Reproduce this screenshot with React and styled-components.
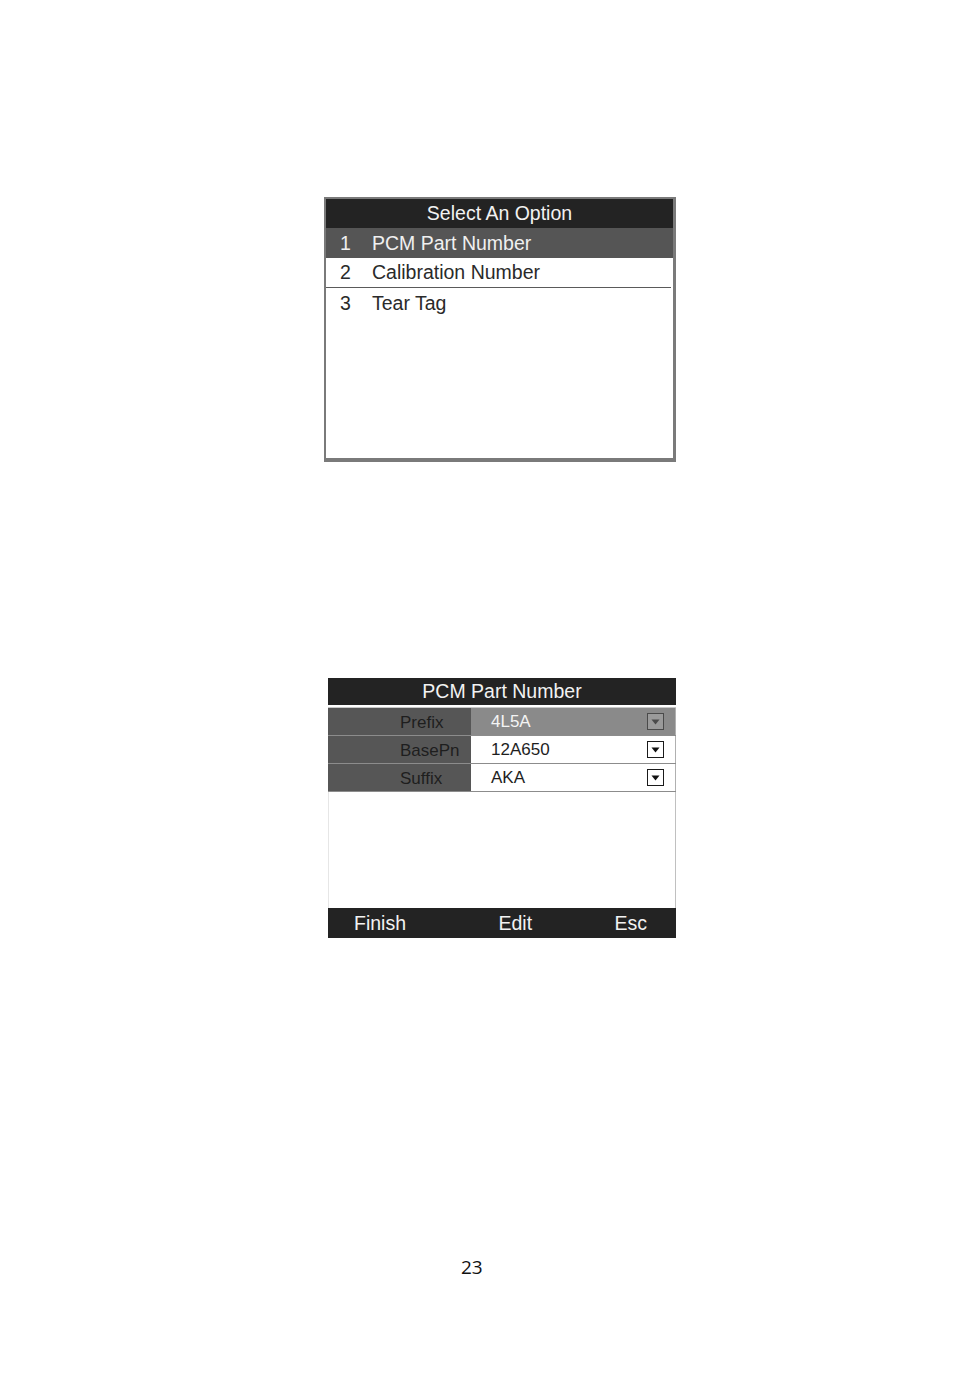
import React from 'react'
import styled, { createGlobalStyle } from 'styled-components'

const Global = createGlobalStyle`
    html, body {
        margin: 0;
        padding: 0;
        background: #ffffff;
    }
    body {
        font-family: "Liberation Sans", Arial, sans-serif;
    }
`

const Page = styled.div`
    width: 954px;
    height: 1374px;
    display: flex;
    flex-direction: column;
    align-items: flex-start;
    padding-top: 197px;
    box-sizing: border-box;
`

const MenuScreen = styled.div`
    margin-left: 324px;
    width: 352px;
    height: 265px;
    box-sizing: border-box;
    border: 2px solid #7a7a7a;
    border-bottom-width: 4px;
    border-right-width: 3px;
    background: #ffffff;
    display: flex;
    flex-direction: column;
`

const TitleBar = styled.div`
    height: ${p => p.h}px;
    flex: none;
    background: #232323;
    color: #f2f2f2;
    font-size: 19.5px;
    display: flex;
    align-items: center;
    justify-content: center;
`

const MenuRow = styled.div`
    height: ${p => p.h}px;
    flex: none;
    display: flex;
    align-items: center;
    font-size: 19.5px;
    background: ${p => (p.active ? '#555555' : '#ffffff')};
    color: ${p => (p.active ? '#f0f0f0' : '#2a2a2a')};
    border-bottom: ${p => (p.line ? '1px solid #5a5a5a' : 'none')};
    margin-right: ${p => (p.line ? '2px' : '0')};
`

const Num = styled.span`
    width: 46px;
    padding-left: 14px;
    box-sizing: border-box;
    flex: none;
`

const PartScreen = styled.div`
    margin-left: 328px;
    margin-top: 216px;
    width: 348px;
    height: 260px;
    display: flex;
    flex-direction: column;
    background: #ffffff;
`

const Gap = styled.div`
    height: 2px;
    flex: none;
    background: #ffffff;
    border-bottom: 1px solid #c8c8c8;
`

const FieldRow = styled.div`
    display: flex;
    height: 27px;
    flex: none;
    border-bottom: 1px solid #8c8c8c;
`

const Label = styled.div`
    width: 143px;
    flex: none;
    background: #565656;
    color: #1e1e1e;
    font-size: 17px;
    padding-left: 72px;
    box-sizing: border-box;
    display: flex;
    align-items: center;
    padding-top: 2px;
`

const Value = styled.div`
    flex: 1;
    background: ${p => (p.active ? '#8a8a8a' : '#ffffff')};
    color: ${p => (p.active ? '#f4f4f4' : '#1e1e1e')};
    font-size: 17px;
    display: flex;
    align-items: center;
    justify-content: space-between;
    padding-left: 20px;
    padding-right: 11px;
    border-right: 1px solid #b0b0b0;
`

const DropBox = styled.div`
    width: 17px;
    height: 17px;
    box-sizing: border-box;
    border: 1.5px solid ${p => (p.active ? '#4a4a4a' : '#1a1a1a')};
    background: ${p => (p.active ? '#9a9a9a' : '#ffffff')};
    display: flex;
    align-items: center;
    justify-content: center;
`

const Empty = styled.div`
    flex: 1;
    border-right: 1px solid #c0c0c0;
    border-left: 1px solid #e6e6e6;
`

const Footer = styled.div`
    height: 30px;
    flex: none;
    background: #232323;
    color: #f2f2f2;
    font-size: 19.5px;
    display: flex;
    align-items: center;
    justify-content: space-between;
    padding: 0 29px 0 26px;
`

const FooterKey = styled.span`
    margin-left: ${p => p.nudge || 0}px;
`

const PageNum = styled.div`
    margin-top: 317px;
    margin-left: 461px;
    font-family: "Open Sans", "Liberation Sans", sans-serif;
    font-size: 19px;
    line-height: 24px;
    color: #111;
`

function Arrow({ active }) {
    return (
        <DropBox active={active}>
            <svg width="9" height="6" viewBox="0 0 9 6">
                <path d="M0.5 0.5 L8.5 0.5 L4.5 5.5 Z" fill={active ? '#4a4a4a' : '#111'} />
            </svg>
        </DropBox>
    )
}

const fields = [
    { label: 'Prefix', value: '4L5A', active: true },
    { label: 'BasePn', value: '12A650' },
    { label: 'Suffix', value: 'AKA' }
]

function App() {
    return (
        <Page>
            <Global />
            <MenuScreen>
                <TitleBar h={29}>Select An Option</TitleBar>
                <MenuRow h={30} active><Num>1</Num>PCM Part Number</MenuRow>
                <MenuRow h={29} line><Num>2</Num>Calibration Number</MenuRow>
                <MenuRow h={31}><Num>3</Num>Tear Tag</MenuRow>
            </MenuScreen>

            <PartScreen>
                <TitleBar h={27}>PCM Part Number</TitleBar>
                <Gap />
                {fields.map(f => (
                    <FieldRow key={f.label}>
                        <Label>{f.label}</Label>
                        <Value active={f.active}>
                            {f.value}
                            <Arrow active={f.active} />
                        </Value>
                    </FieldRow>
                ))}
                <Empty />
                <Footer>
                    <FooterKey>Finish</FooterKey>
                    <FooterKey nudge={10}>Edit</FooterKey>
                    <FooterKey>Esc</FooterKey>
                </Footer>
            </PartScreen>

            <PageNum>23</PageNum>
        </Page>
    )
}

export default App
